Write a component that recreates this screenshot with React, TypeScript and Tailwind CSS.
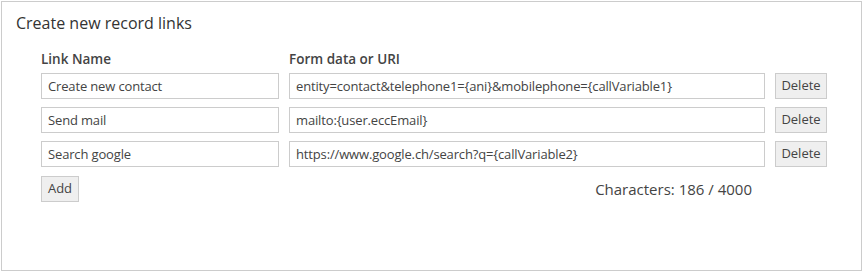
const rows = [
  { name: "Create new contact", uri: "entity=contact&telephone1={ani}&mobilephone={callVariable1}" },
  { name: "Send mail", uri: "mailto:{user.eccEmail}" },
  { name: "Search google", uri: "https://www.google.ch/search?q={callVariable2}" },
];

const font = "font-['Segoe_UI','Open_Sans',sans-serif]";

export default function App() {
  return (
    <div className={`p-px bg-white ${font} text-[#333]`}>
      <div className="h-[270px] w-[861px] border border-[#cccccc]">
        <h1 className="pl-[14px] pt-[10px] text-[16px] leading-[22px] text-[#333]">Create new record links</h1>
        <div className="ml-[39px] mt-[15px]">
          <div className="flex gap-[10px] text-[13.5px] font-semibold leading-[20px] text-[#444]">
            <div className="w-[238px]">Link Name</div>
            <div className="w-[476px]">Form data or URI</div>
          </div>
          <div className="mt-[4px] flex flex-col gap-[8px]">
            {rows.map((r) => (
              <div key={r.name} className="flex gap-[10px]">
                <input
                  defaultValue={r.name}
                  className="h-[26px] w-[238px] border border-[#cccccc] px-[6px] text-[13px] tracking-[-0.15px] text-[#444] outline-none"
                />
                <input
                  defaultValue={r.uri}
                  className="h-[26px] w-[476px] border border-[#cccccc] px-[6px] text-[13px] tracking-[-0.15px] text-[#444] outline-none"
                />
                <button className="h-[26px] w-[52px] border border-[#cccccc] bg-[#efefef] text-[13px] text-[#444]">
                  Delete
                </button>
              </div>
            ))}
            <div className="flex gap-[10px]">
              <div className="w-[238px]">
                <button className="h-[26px] w-[38px] border border-[#cccccc] bg-[#efefef] text-[13px] text-[#444]">
                  Add
                </button>
              </div>
              <div className="w-[476px] pr-[13px] pt-[4px] text-right text-[15px] leading-[20px] text-[#444]">
                Characters: 186 / 4000
              </div>
            </div>
          </div>
        </div>
      </div>
    </div>
  );
}
